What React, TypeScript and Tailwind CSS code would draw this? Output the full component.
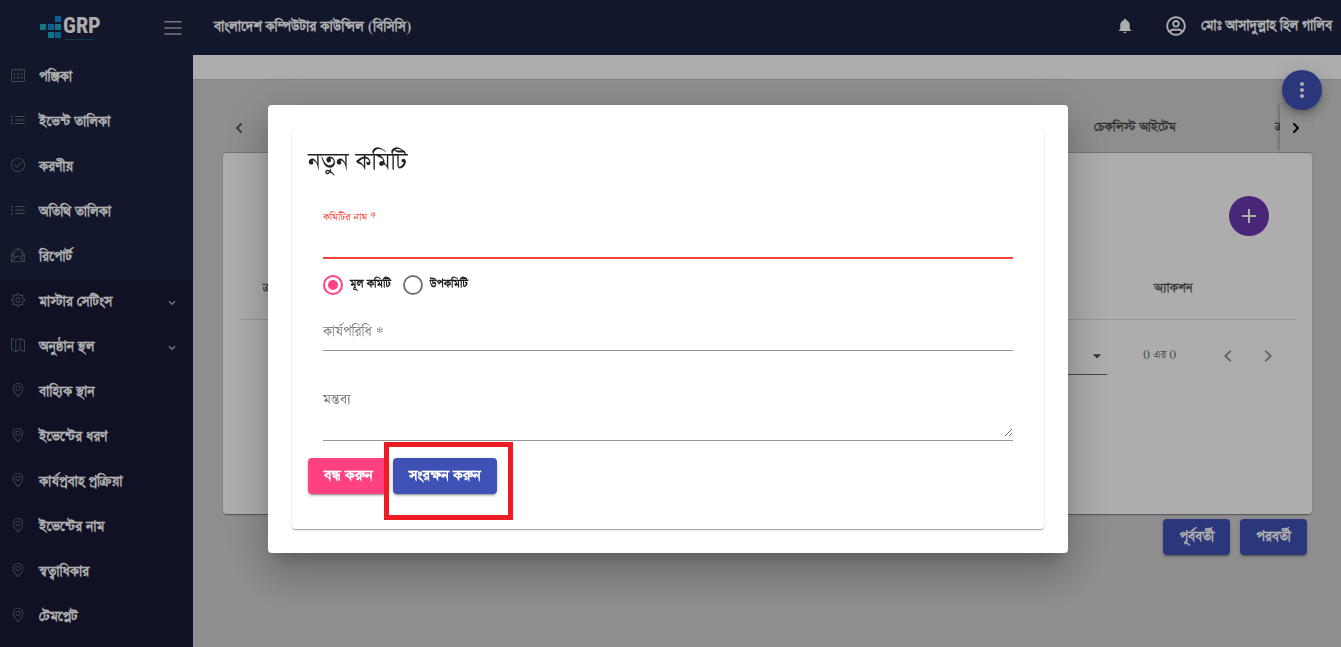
import { useState } from "react";
import type { ReactNode } from "react";
import type { IconType } from "react-icons";
import {
  SlCalender,
  SlCheck,
  SlEnvolopeLetter,
  SlList,
  SlLocationPin,
  SlMap,
  SlMenu,
  SlSettings,
} from "react-icons/sl";
import { FaRegUserCircle } from "react-icons/fa";
import { IoMdNotifications } from "react-icons/io";
import {
  MdAdd,
  MdArrowDropDown,
  MdChevronLeft,
  MdChevronRight,
  MdMoreVert,
} from "react-icons/md";
import { ChevronDown, ChevronLeft, ChevronRight } from "lucide-react";

interface NavEntry {
  label: string;
  icon: IconType;
  expandable?: boolean;
}

const MAIN_NAV: NavEntry[] = [
  { label: "পঞ্জিকা", icon: SlCalender },
  { label: "ইভেন্ট তালিকা", icon: SlList },
  { label: "করণীয়", icon: SlCheck },
  { label: "অতিথি তালিকা", icon: SlList },
  { label: "রিপোর্ট", icon: SlEnvolopeLetter },
];

const SETTINGS_NAV: NavEntry[] = [
  { label: "মাস্টার সেটিংস", icon: SlSettings, expandable: true },
  { label: "অনুষ্ঠান স্থল", icon: SlMap, expandable: true },
  { label: "বাহ্যিক স্থান", icon: SlLocationPin },
  { label: "ইভেন্টের ধরণ", icon: SlLocationPin },
  { label: "কার্যপ্রবাহ প্রক্রিয়া", icon: SlLocationPin },
  { label: "ইভেন্টের নাম", icon: SlLocationPin },
  { label: "স্বত্বাধিকার", icon: SlLocationPin },
  { label: "টেমপ্লেট", icon: SlLocationPin },
];

function Logo() {
  return (
    <svg width="66" height="28" viewBox="0 0 66 28" role="img" aria-label="GRP">
      <g fill="#178bd6">
        <rect x="15" y="2" width="6" height="6" />
        <rect x="8" y="10" width="6" height="6" />
        <rect x="15" y="18" width="6" height="6" />
      </g>
      <g fill="#19aec4">
        <rect x="0" y="10" width="6" height="6" />
        <rect x="15" y="10" width="6" height="6" />
        <rect x="8" y="18" width="6" height="6" />
      </g>
      <text
        x="23"
        y="19"
        className="fill-white font-['Roboto_Condensed','Open_Sans',sans-serif] text-[22px] font-bold"
      >
        GRP
      </text>
      <text x="24" y="26" className="fill-[#19aec4] font-['Open_Sans',sans-serif] text-[2px]">
        Government Resource Planning
      </text>
    </svg>
  );
}

function NavItem({ label, icon: Icon, expandable }: NavEntry) {
  return (
    <li>
      <a href="#" className="flex h-[45px] items-center gap-[14px] pb-1.5 pl-[11px] pr-4">
        <Icon className="size-[14px] text-[#5c6f7c]" />
        <span className="flex-1 pt-1 text-[16px] font-bold text-white">{label}</span>
        {expandable && <ChevronDown className="mt-1.5 size-[10px] text-[#a0a6b4]" strokeWidth={4} />}
      </a>
    </li>
  );
}

function Sidebar() {
  return (
    <nav className="flex w-[193px] shrink-0 flex-col bg-[#1d2342]">
      <ul>
        {MAIN_NAV.map((entry) => (
          <NavItem key={entry.label} {...entry} />
        ))}
      </ul>
      <ul className="flex-1 bg-[#181a36]">
        {SETTINGS_NAV.map((entry) => (
          <NavItem key={entry.label} {...entry} />
        ))}
      </ul>
    </nav>
  );
}

function Header() {
  return (
    <header className="flex h-[55px] shrink-0 items-center bg-[#1d2342] pr-[9px] text-white">
      <div className="flex w-[193px] items-center justify-between pl-10 pr-[11px]">
        <Logo />
        <button type="button" aria-label="Menu">
          <SlMenu className="size-[18px] text-[#a8afbd]" />
        </button>
      </div>
      <h1 className="flex-1 pb-0.5 pl-[21px] text-[16px] font-bold">
        বাংলাদেশ কম্পিউটার কাউন্সিল (বিসিসি)
      </h1>
      <div className="flex items-center gap-8 pb-[3px]">
        <button type="button" aria-label="Notifications">
          <IoMdNotifications className="size-[18px]" />
        </button>
        <button type="button" className="flex items-center gap-[15px] text-[16px] font-bold">
          <FaRegUserCircle className="size-5" />
          মোঃ আসাদুল্লাহ হিল গালিব
        </button>
      </div>
    </header>
  );
}

function RaisedButton({ children, className }: { children: ReactNode; className: string }) {
  return (
    <button
      type="button"
      className={`h-9 rounded-[4px] px-4 font-bold text-white shadow-[0_3px_1px_-2px_rgba(0,0,0,0.2),0_2px_2px_0_rgba(0,0,0,0.14),0_1px_5px_0_rgba(0,0,0,0.12)] ${className}`}
    >
      {children}
    </button>
  );
}

function CommitteeTable() {
  return (
    <section className="min-h-[361px] rounded-[4px] bg-white px-4 pt-[43px] shadow-[0_2px_1px_-1px_rgba(0,0,0,0.2),0_1px_1px_0_rgba(0,0,0,0.14),0_1px_3px_0_rgba(0,0,0,0.12)]">
      <div className="flex justify-end pr-[27px]">
        <button
          type="button"
          aria-label="Add"
          className="flex size-10 items-center justify-center rounded-full bg-[#6c38b1] text-white"
        >
          <MdAdd className="size-6" />
        </button>
      </div>
      <table className="mt-6 w-full border-b border-black/12 text-left text-[15px] text-black/60">
        <thead>
          <tr className="h-[59px]">
            <th className="pl-6 font-bold">ক্রমিক</th>
            <th className="w-[142px] font-bold">অ্যাকশন</th>
          </tr>
        </thead>
      </table>
      <div className="flex h-[73px] items-center justify-end pr-2 text-[13px] text-black/60">
        <div className="grid w-14 items-center border-b border-black/60 *:col-start-1 *:row-start-1">
          <select aria-label="Items per page" className="h-9 w-full appearance-none bg-transparent">
            <option>5</option>
          </select>
          <MdArrowDropDown className="pointer-events-none size-5 justify-self-end text-black/70" />
        </div>
        <span className="ml-9 mr-8">0 এর 0</span>
        <button type="button" aria-label="Previous page" className="p-2">
          <MdChevronLeft className="size-6 text-black/40" />
        </button>
        <button type="button" aria-label="Next page" className="p-2">
          <MdChevronRight className="size-6 text-black/40" />
        </button>
      </div>
    </section>
  );
}

function Content() {
  return (
    <main className="relative flex-1 bg-[#d2d2d2]">
      <div className="h-[25px] border-b border-[#c4c4c4] bg-white" />
      <div className="ml-[30px] mr-[29px] pt-6">
        <div className="flex h-[49px] border-b border-black/15">
          <button type="button" aria-label="Previous tabs" className="w-8 pl-2 text-black/60">
            <ChevronLeft className="size-4" strokeWidth={3} />
          </button>
          <div className="flex flex-1 justify-end overflow-hidden" role="tablist">
            <div className="-mr-[95px] flex shrink-0 text-[15px] font-bold text-black/60">
              <button type="button" role="tab" className="w-40">
                চেকলিস্ট আইটেম
              </button>
              <button type="button" role="tab" className="w-40">
                ক্রয়সমূহ
              </button>
            </div>
          </div>
          <button
            type="button"
            aria-label="Next tabs"
            className="w-8 pl-2 shadow-[-2px_0_4px_-1px_rgba(0,0,0,0.3)]"
          >
            <ChevronRight className="size-4" strokeWidth={3} />
          </button>
        </div>
        <CommitteeTable />
        <div className="mt-[5px] flex justify-end gap-[10px] pr-[5px]">
          <RaisedButton className="bg-[#3f51b5] text-[16px]">পূর্ববর্তী</RaisedButton>
          <RaisedButton className="bg-[#3f51b5] text-[16px]">পরবর্তী</RaisedButton>
        </div>
      </div>
      <button
        type="button"
        aria-label="More actions"
        className="absolute right-[19px] top-[15px] flex size-10 items-center justify-center rounded-full bg-[#3f51b5] text-white shadow-[0_3px_5px_-1px_rgba(0,0,0,0.2),0_6px_10px_0_rgba(0,0,0,0.14),0_1px_18px_0_rgba(0,0,0,0.12)]"
      >
        <MdMoreVert className="size-6" />
      </button>
    </main>
  );
}

function KindRadio({
  label,
  checked,
  onSelect,
}: {
  label: string;
  checked: boolean;
  onSelect: () => void;
}) {
  return (
    <label className="flex items-center gap-[7px] text-[13px] leading-4 font-bold text-black/87">
      <input
        type="radio"
        name="kind"
        checked={checked}
        onChange={onSelect}
        className="size-5 appearance-none rounded-full border-2 border-black/54 bg-clip-content p-[3px] checked:border-[#ff4081] checked:bg-[#ff4081]"
      />
      <span>{label}</span>
    </label>
  );
}

function CommitteeDialog() {
  const [kind, setKind] = useState<"main" | "sub">("main");

  return (
    <div className="fixed inset-0 flex items-start justify-center bg-black/32 pr-[5px] pt-[105px]">
      <div
        role="dialog"
        aria-modal="true"
        aria-labelledby="dialog-title"
        className="w-full max-w-[800px] rounded-[4px] bg-white p-6 shadow-[0_11px_15px_-7px_rgba(0,0,0,0.2),0_24px_38px_3px_rgba(0,0,0,0.14),0_9px_46px_8px_rgba(0,0,0,0.12)]"
      >
        <form className="rounded-[4px] px-4 pb-[35px] pt-4 shadow-[0_2px_1px_-1px_rgba(0,0,0,0.2),0_1px_1px_0_rgba(0,0,0,0.14),0_1px_3px_0_rgba(0,0,0,0.12)]">
          <h2 id="dialog-title" className="text-[28px] leading-9 text-black/87">
            নতুন কমিটি
          </h2>
          <div className="px-[15px] pt-7">
            <label htmlFor="name" className="block text-[12px] leading-4 text-[#f44336]">
              কমিটির নাম *
            </label>
            <input
              id="name"
              type="text"
              className="block h-[34px] w-full border-b-2 border-[#f44336] outline-none"
            />
            <div className="mt-4 flex h-5 items-center gap-3">
              <KindRadio label="মূল কমিটি" checked={kind === "main"} onSelect={() => setKind("main")} />
              <KindRadio label="উপকমিটি" checked={kind === "sub"} onSelect={() => setKind("sub")} />
            </div>
            <div className="mt-6 grid border-b border-black/42 text-[16px] *:col-start-1 *:row-start-1">
              <label htmlFor="scope" className="leading-[26px] text-black/54">
                কার্যপরিধি *
              </label>
              <input id="scope" type="text" className="h-[31px] bg-transparent outline-none" />
            </div>
            <div className="mt-9 grid border-b border-black/42 pb-[3px] text-[16px] *:col-start-1 *:row-start-1">
              <label htmlFor="remarks" className="leading-[26px] text-black/54">
                মন্তব্য
              </label>
              <textarea id="remarks" className="h-[50px] resize-y bg-transparent outline-none" />
            </div>
          </div>
          <div className="mt-[17px] flex gap-1">
            <RaisedButton className="bg-[#ff4081] text-[17px]">বন্ধ করুন</RaisedButton>
            <div className="relative">
              <RaisedButton className="bg-[#3f51b5] text-[17px]">সংরক্ষন করুন</RaisedButton>
              {/* highlight frame around the save button */}
              <span className="pointer-events-none absolute -bottom-[26px] -left-[9px] -right-4 -top-4 border-[5px] border-[#ed1c24]" />
            </div>
          </div>
        </form>
      </div>
    </div>
  );
}

export default function App() {
  return (
    <div className="flex h-screen flex-col overflow-hidden font-['FreeSerif','Noto_Sans',serif]">
      <Header />
      <div className="flex min-h-0 flex-1">
        <Sidebar />
        <Content />
      </div>
      <CommitteeDialog />
    </div>
  );
}
